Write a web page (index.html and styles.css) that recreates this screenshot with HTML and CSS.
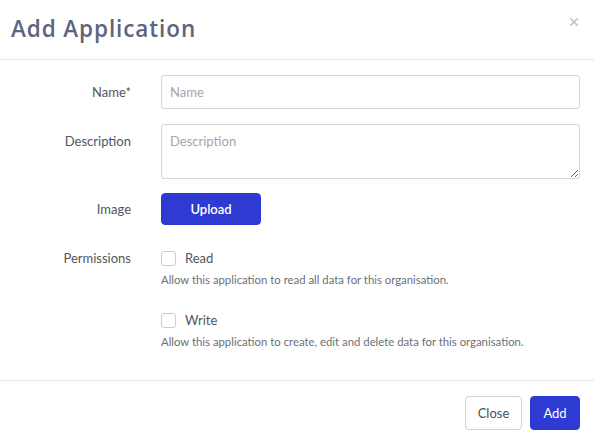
FILE: index.html
```html
<!DOCTYPE html>
<html>
<head>
<meta charset="utf-8">
<link rel="stylesheet" href="styles.css">
</head>
<body>
<div class="modal">
  <div class="header">
    <h1 class="title">Add Application</h1>
    <svg class="close-x" width="8" height="8" viewBox="0 0 8 8"><path d="M0.8 0.8L7.2 7.2M7.2 0.8L0.8 7.2" stroke="#c6c6c6" stroke-width="1.8" stroke-linecap="square"/></svg>
  </div>
  <div class="body">
    <div class="row row-name">
      <label class="label">Name*</label>
      <input class="input" type="text" placeholder="Name">
    </div>
    <div class="row row-desc">
      <label class="label label-top">Description</label>
      <textarea class="textarea" placeholder="Description"></textarea>
    </div>
    <div class="row row-image">
      <label class="label">Image</label>
      <button class="btn btn-primary btn-upload">Upload</button>
    </div>
    <div class="row row-perm">
      <label class="label label-top">Permissions</label>
      <div class="perms">
        <div class="perm">
          <div class="check-line"><span class="checkbox"></span><span class="check-text">Read</span></div>
          <div class="help">Allow this application to read all data for this organisation.</div>
        </div>
        <div class="perm perm-write">
          <div class="check-line"><span class="checkbox"></span><span class="check-text">Write</span></div>
          <div class="help">Allow this application to create, edit and delete data for this organisation.</div>
        </div>
      </div>
    </div>
  </div>
  <div class="footer">
    <button class="btn btn-default">Close</button>
    <button class="btn btn-primary btn-add">Add</button>
  </div>
</div>
</body>
</html>
```
FILE: styles.css
```css
* { box-sizing: border-box; }
html, body { margin: 0; padding: 0; background: #fff; }
body { font-family: Lato, "Open Sans", sans-serif; color: #4a4f57; }
.modal { width: 594px; height: 444px; display: flex; flex-direction: column; }
.header {
  height: 60px; border-bottom: 1px solid #e5e5e5;
  display: flex; align-items: center; justify-content: space-between;
  padding: 0 16px 2px 11px;
}
.title {
  margin: 0; font-family: "Open Sans", sans-serif; font-weight: 600;
  font-size: 22.5px; color: #5b6580; letter-spacing: 0.9px;
}
.close-x { display: block; margin-top: -14px; }
.body { padding: 15px 14px 0 0; flex: 1; display: flex; flex-direction: column; }
.row { display: grid; grid-template-columns: 131px 1fr; column-gap: 30px; align-items: center; }
.label { text-align: right; font-size: 13px; color: #52565e; }
.label-top { align-self: start; }
.input, .textarea {
  width: 100%; border: 1px solid #d4d6de; border-radius: 3px;
  font-family: Lato, sans-serif; font-size: 13px; color: #333; padding: 0 8px; margin: 0;
}
.input { height: 34px; }
.input::placeholder, .textarea::placeholder { color: #a3a6ad; }
.row-desc { margin-top: 15px; }
.row-desc .label { padding-top: 9px; }
.textarea { height: 55px; padding-top: 8px; resize: vertical; display: block; }
.row-image { margin-top: 14px; }
.btn {
  font-family: Lato, sans-serif; font-size: 13px; border-radius: 4px; cursor: pointer;
  height: 34px; margin: 0;
}
.btn-primary { background: #2e3bd3; color: #fff; border: 1px solid #2e3bd3; }
.btn-upload { width: 100px; height: 32px; justify-self: start; font-weight: 600; }
.row-perm { margin-top: 25px; }
.row-perm .label { padding-top: 0; line-height: 16px; }
.perms { display: flex; flex-direction: column; }
.check-line { display: flex; align-items: center; height: 16px; }
.checkbox {
  width: 15px; height: 15px; border: 1.5px solid #c9ccd8; border-radius: 3px; display: inline-block;
}
.check-text { margin-left: 9px; font-size: 13px; color: #52565e; }
.help { margin-top: 7px; font-size: 11.35px; color: #6b6f76; line-height: 14px; }
.perm-write { margin-top: 25px; }
.footer {
  height: 64px; border-top: 1px solid #e5e5e5; display: flex; justify-content: flex-end;
  align-items: center; gap: 8px; padding: 0 14px 0 0;
}
.btn-default { background: #fff; color: #4a4f57; border: 1px solid #cfd2d8; width: 57px; }
.btn-add { width: 50px; }
```
